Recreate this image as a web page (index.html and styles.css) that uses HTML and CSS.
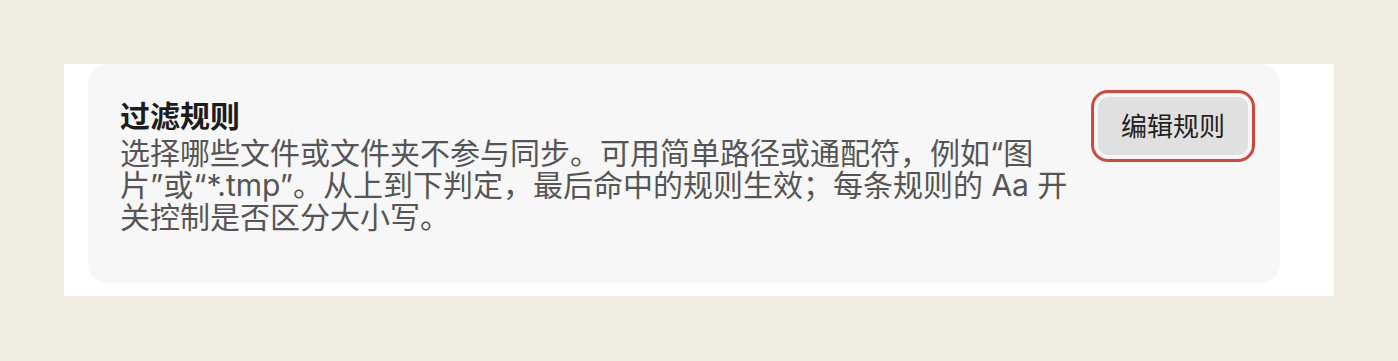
FILE: index.html
```html
<!DOCTYPE html>
<html lang="zh-CN">
<head>
    <meta charset="UTF-8">
    <meta name="viewport" content="width=device-width, initial-scale=1.0">
    <title>过滤规则</title>
    <link rel="stylesheet" href="styles.css">
</head>

<body>
    <div class="settings-panel">
        <div class="setting-card">
            <div class="setting-card-info">
                <div class="setting-card-title">过滤规则</div>
                <div class="setting-card-desc">选择哪些文件或文件夹不参与同步。可用简单路径或通配符，例如“图片”或“*.tmp”。从上到下判定，最后命中的规则生效；每条规则的 Aa 开关控制是否区分大小写。</div>
            </div>
            <button class="setting-card-btn focused" type="button">编辑规则</button>
        </div>
    </div>
</body>
</html>
```

FILE: styles.css
```css
body {
  margin: 0;
  padding: 64px 64px 65px;
  background-color: #efece2;
  font-family: Inter, "Noto Sans CJK SC", sans-serif;
}

.settings-panel {
  background-color: #ffffff;
  padding: 0 54px 13px 24px;
}

.setting-card {
  display: flex;
  align-items: flex-start;
  gap: 24px;
  padding: 34px 32px 50px;
  background-color: #f7f7f7;
  border-radius: 20px;
}

.setting-card-info {
  flex: 1;
}

.setting-card-title {
  font-size: 30px;
  line-height: 36px;
  font-weight: 700;
  color: #1c1c1c;
}

.setting-card-desc {
  margin-top: 3px;
  font-size: 30px;
  line-height: 32px;
  color: #555555;
}

.setting-card-btn {
  flex-shrink: 0;
  margin-top: -1px;
  padding: 15px 23px 13px;
  font-family: inherit;
  font-size: 26px;
  line-height: 30px;
  color: #222222;
  background-color: #e0e0e0;
  border: none;
  border-radius: 10px;
  cursor: pointer;
}

.setting-card-btn.focused {
  outline: 3px solid #d6463c;
  outline-offset: 4px;
}
```
